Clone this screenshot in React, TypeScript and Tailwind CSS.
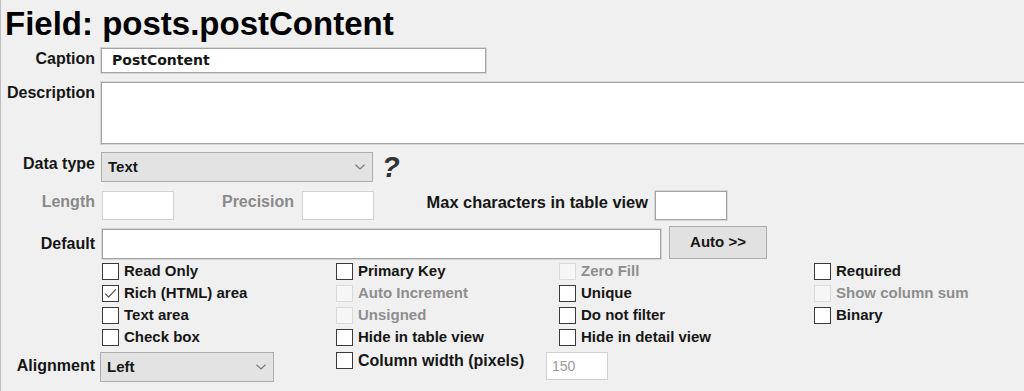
import React from 'react';

const labelBase = "text-right font-bold text-[16px] shrink-0";
const label = `${labelBase} text-[#161616]`;
const dimLabel = `${labelBase} text-[#8a8a8a]`;
const inputBox = "bg-white border border-[#a3a3a3] ring-1 ring-[#d6d6d6]";
const dimBox = "bg-white border border-[#d2d2d2]";

function Chevron() {
  return (
    <svg width="10" height="6" viewBox="0 0 10 6" className="shrink-0">
      <polyline points="0.5,0.8 5,5 9.5,0.8" fill="none" stroke="#7a7a7a" strokeWidth="1.2" />
    </svg>
  );
}

function Select({ value, width }: { value: string; width: string }) {
  return (
    <div className={`${width} h-[30px] flex items-center justify-between pl-[6px] pr-[7px] bg-[#e3e3e3] border border-[#adadad]`}>
      <span className="font-bold text-[15px] text-[#161616]">{value}</span>
      <Chevron />
    </div>
  );
}

function Check({ text, checked, disabled, big }: { text: string; checked?: boolean; disabled?: boolean; big?: boolean }) {
  return (
    <div className="flex items-center gap-[5px] h-[17px]">
      <div
        className={
          disabled
            ? "w-[17px] h-[17px] shrink-0 bg-[#f6f6f6] border border-[#dadada]"
            : "w-[17px] h-[17px] shrink-0 bg-white border border-[#3a3a3a] flex items-center justify-center"
        }
      >
        {checked && (
          <svg width="13" height="11" viewBox="0 0 13 11">
            <polyline points="1.2,5.6 4.6,9 11.8,1.4" fill="none" stroke="#5a5a5a" strokeWidth="1.3" />
          </svg>
        )}
      </div>
      <span
        className={`font-bold whitespace-nowrap ${big ? "text-[16px]" : "text-[15px]"} ${
          disabled ? "text-[#8e8e8e]" : "text-[#161616]"
        }`}
      >
        {text}
      </span>
    </div>
  );
}

const grid: [string, boolean?, boolean?][][] = [
  [["Read Only"], ["Primary Key"], ["Zero Fill", false, true], ["Required"]],
  [["Rich (HTML) area", true], ["Auto Increment", false, true], ["Unique"], ["Show column sum", false, true]],
  [["Text area"], ["Unsigned", false, true], ["Do not filter"], ["Binary"]],
  [["Check box"], ["Hide in table view"], ["Hide in detail view"]],
];

export default function App() {
  return (
    <div className="w-[1024px] h-[391px] overflow-hidden bg-[#f0f0f0] border-l border-[#bdbdbd] font-['Liberation_Sans',Arial,sans-serif]">
      <h1 className="pl-[4px] pt-[7px] text-[33px] leading-[33px] font-bold text-black whitespace-nowrap">
        Field: posts.postContent
      </h1>

      {/* caption */}
      <div className="mt-[8px] flex items-start gap-[6px]">
        <div className={`${label} w-[94px] leading-[22px]`}>Caption</div>
        <div className={`${inputBox} w-[385px] h-[25px] flex items-center pl-[10px]`}>
          <span className="font-['DejaVu_Sans',sans-serif] font-bold text-[14px] text-[#161616]">PostContent</span>
        </div>
      </div>

      {/* description */}
      <div className="mt-[9px] flex items-start gap-[6px]">
        <div className={`${label} w-[94px] leading-[22px]`}>Description</div>
        <div className={`${inputBox} w-[940px] h-[62px] shrink-0`} />
      </div>

      {/* data type */}
      <div className="mt-[8px] flex items-start gap-[6px]">
        <div className={`${label} w-[94px] leading-[24px]`}>Data type</div>
        <Select value="Text" width="w-[272px]" />
        <span className="ml-[3px] mt-[1px] font-bold italic text-[29px] leading-[28px] text-[#333]">?</span>
      </div>

      {/* length / precision / max chars */}
      <div className="mt-[9px] flex items-start">
        <div className={`${dimLabel} w-[94px] leading-[22px]`}>Length</div>
        <div className={`${dimBox} ml-[7px] w-[72px] h-[29px]`} />
        <div className={`${dimLabel} w-[120px] leading-[22px]`}>Precision</div>
        <div className={`${dimBox} ml-[8px] w-[72px] h-[29px]`} />
        <div className="w-[274px] shrink-0 text-right font-bold text-[16.4px] leading-[22px] text-[#161616] whitespace-nowrap">
          Max characters in table view
        </div>
        <div className={`${inputBox} ml-[7px] w-[72px] h-[29px]`} />
      </div>

      {/* default */}
      <div className="mt-[6px] flex items-start">
        <div className={`${label} w-[94px] mt-[3px] leading-[29px]`}>Default</div>
        <div className={`${inputBox} ml-[7px] mt-[3px] w-[559px] h-[30px]`} />
        <button className="ml-[8px] w-[98px] h-[33px] bg-[#e1e1e1] border border-[#adadad] font-bold text-[15px] text-[#161616]">
          Auto &gt;&gt;
        </button>
      </div>

      {/* flags */}
      <div className="mt-[4px] pl-[101px] grid grid-cols-[234px_223px_255px_1fr]">
        {grid.map((row, r) =>
          [0, 1, 2, 3].map((c) => {
            const cell = row[c];
            return (
              <div key={`${r}-${c}`} className="h-[22px]">
                {cell && <Check text={cell[0]} checked={cell[1]} disabled={cell[2]} />}
              </div>
            );
          })
        )}
      </div>

      {/* alignment / column width */}
      <div className="mt-[1px] flex items-start">
        <div className={`${label} w-[94px] leading-[27px]`}>Alignment</div>
        <div className="ml-[5px]">
          <Select value="Left" width="w-[174px]" />
        </div>
        <div className="ml-[62px] w-[210px]">
          <Check text="Column width (pixels)" big />
        </div>
        <div className={`${dimBox} w-[62px] h-[28px] flex items-center pl-[5px] text-[14px] text-[#9a9a9a]`}>150</div>
      </div>
    </div>
  );
}
